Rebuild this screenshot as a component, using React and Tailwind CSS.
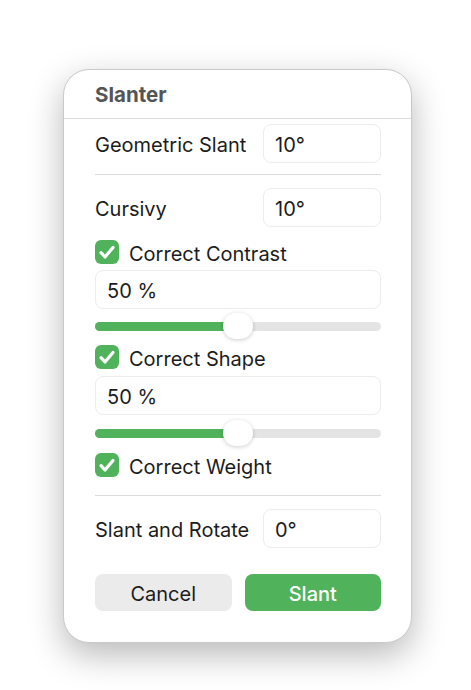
import React from 'react';

const font = { fontFamily: 'Inter, "Helvetica Neue", Arial, sans-serif' };

function Field({ value, className = '' }) {
  return (
    <div className={`h-[39px] flex items-center pl-[11px] pt-[3px] rounded-lg bg-white border border-[#ececec] text-[20px] text-[#1c1c1c] ${className}`}>
      {value}
    </div>
  );
}

function Check({ label, className = '' }) {
  return (
    <div className={`flex items-center gap-[10px] h-6 ${className}`}>
      <span className="w-6 h-6 rounded-[6px] bg-[#50b25a] flex items-center justify-center">
        <svg width="24" height="24" viewBox="0 0 24 24" fill="none">
          <path d="M6 12.6l4 4.4L18 7.4" stroke="white" strokeWidth="3.2" strokeLinecap="round" strokeLinejoin="round" />
        </svg>
      </span>
      <span className="pt-[3px] text-[20px] text-[#1c1c1c]">{label}</span>
    </div>
  );
}

function Slider({ pct, className = '' }) {
  return (
    <div className={`relative h-[26px] flex items-center ${className}`}>
      <div className="w-full h-[9px] rounded-full bg-[#e4e4e4] overflow-hidden">
        <div className="h-full bg-[#50b25a]" style={{ width: `${pct}%` }} />
      </div>
      <div
        className="absolute top-0 w-[30px] h-[26px] rounded-full bg-white shadow-[0_1px_4px_rgba(0,0,0,0.2)]"
        style={{ left: `calc(${pct}% - 15px)` }}
      />
    </div>
  );
}

function Row({ label, value, className = '' }) {
  return (
    <div className={`flex items-center ${className}`}>
      <span className="w-[168px] pt-[3px] text-[20px] text-[#1c1c1c]">{label}</span>
      <Field value={value} className="flex-1" />
    </div>
  );
}

export default function App() {
  return (
    <div className="min-h-[690px] bg-white pt-[69px] pl-[63px]" style={font}>
      <div className="w-[349px] h-[574px] rounded-[26px] bg-white border border-[#c9c9c9] shadow-[0_12px_34px_rgba(0,0,0,0.28)] flex flex-col overflow-hidden">
        {/* Header */}
        <div className="h-[49px] flex items-center pl-[31px] pt-[3px] border-b border-[#dcdcdc]">
          <span className="text-[20.5px] font-bold text-[#555555]">Slanter</span>
        </div>

        <div className="pl-[31px] pr-[30px] flex flex-col">
          <Row label="Geometric Slant" value="10°" className="mt-[5px]" />
          <div className="h-px bg-[#dcdcdc] mt-[11px]" />
          <Row label="Cursivy" value="10°" className="mt-[13px]" />

          <Check label="Correct Contrast" className="mt-[13px]" />
          <Field value="50 %" className="mt-[6px]" />
          <Slider pct={50} className="mt-[4px]" />

          <Check label="Correct Shape" className="mt-[6px]" />
          <Field value="50 %" className="mt-[7px]" />
          <Slider pct={50} className="mt-[5px]" />

          <Check label="Correct Weight" className="mt-[7px]" />
          <div className="h-px bg-[#dcdcdc] mt-[18px]" />
          <Row label="Slant and Rotate" value="0°" className="mt-[13px]" />

          <div className="flex gap-[13px] mt-[26px]">
            <button className="flex-1 h-[37px] pt-[3px] rounded-lg bg-[#ebebeb] text-[20px] text-[#1c1c1c]">Cancel</button>
            <button className="flex-1 h-[37px] pt-[3px] rounded-lg bg-[#50b25a] text-[20px] text-white font-medium">Slant</button>
          </div>
        </div>
      </div>
    </div>
  );
}
